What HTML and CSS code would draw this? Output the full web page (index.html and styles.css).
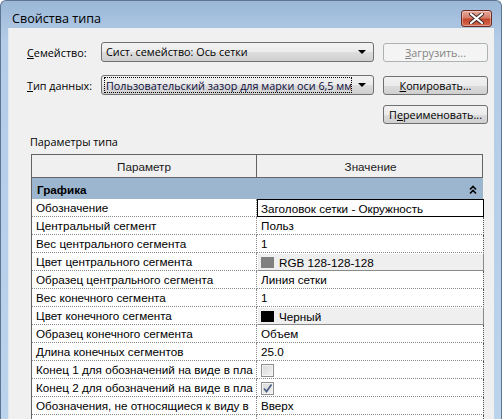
FILE: index.html
```html
<!DOCTYPE html>
<html lang="ru">
<head>
    <meta charset="UTF-8">
    <title>Свойства типа</title>
    <link rel="stylesheet" href="styles.css">
</head>
<body>

    <div class="window">
        <!-- Title bar -->
        <div class="titlebar">
            <span class="title">Свойства типа</span>
            <span class="close-btn">
                <svg width="15" height="11" viewBox="0 0 15 11">
                    <path d="M2 1 L13 10 M13 1 L2 10" stroke="#3a2a28" stroke-width="4" stroke-linecap="round"/>
                    <path d="M2 1 L13 10 M13 1 L2 10" stroke="#fff" stroke-width="2.2" stroke-linecap="round"/>
                </svg>
            </span>
        </div>

        <div class="client">
            <!-- Family -->
            <div class="form-row">
                <span class="field-label"><u>С</u>емейство:</span>
                <div class="combo">
                    <span class="combo-text">Сист. семейство: Ось сетки</span>
                    <span class="combo-arrow"></span>
                </div>
                <span class="btn disabled"><u>З</u>агрузить...</span>
            </div>

            <!-- Type -->
            <div class="form-row row-type">
                <span class="field-label"><u>Т</u>ип данных:</span>
                <div class="combo">
                    <span class="combo-text focused">Пользовательский зазор для марки оси 6,5 мм</span>
                    <span class="combo-arrow"></span>
                </div>
                <span class="btn"><u>К</u>опировать...</span>
            </div>

            <div class="form-row row-rename">
                <span class="btn">П<u>е</u>реименовать...</span>
            </div>

            <div class="section-label">Параметры типа</div>

            <!-- Property grid -->
            <div class="grid">
                <div class="grid-head">
                    <div class="head-cell">Параметр</div>
                    <div class="head-cell">Значение</div>
                </div>

                <div class="group-row">
                    <span>Графика</span>
                    <svg class="collapse" width="8" height="10" viewBox="0 0 8 10">
                        <path d="M1 4.5 L4 1.5 L7 4.5 M1 8.5 L4 5.5 L7 8.5" fill="none" stroke="#000" stroke-width="1.6"/>
                    </svg>
                </div>

                <div class="prop-row">
                    <div class="prop-name">Обозначение</div>
                    <div class="prop-value editing">Заголовок сетки - Окружность</div>
                </div>
                <div class="prop-row">
                    <div class="prop-name">Центральный сегмент</div>
                    <div class="prop-value">Польз</div>
                </div>
                <div class="prop-row">
                    <div class="prop-name">Вес центрального сегмента</div>
                    <div class="prop-value">1</div>
                </div>
                <div class="prop-row">
                    <div class="prop-name">Цвет центрального сегмента</div>
                    <div class="prop-value color-btn"><span class="swatch gray"></span>RGB 128-128-128</div>
                </div>
                <div class="prop-row">
                    <div class="prop-name">Образец центрального сегмента</div>
                    <div class="prop-value">Линия сетки</div>
                </div>
                <div class="prop-row">
                    <div class="prop-name">Вес конечного сегмента</div>
                    <div class="prop-value">1</div>
                </div>
                <div class="prop-row">
                    <div class="prop-name">Цвет конечного сегмента</div>
                    <div class="prop-value color-btn"><span class="swatch black"></span>Черный</div>
                </div>
                <div class="prop-row">
                    <div class="prop-name">Образец конечного сегмента</div>
                    <div class="prop-value">Объем</div>
                </div>
                <div class="prop-row">
                    <div class="prop-name">Длина конечных сегментов</div>
                    <div class="prop-value">25.0</div>
                </div>
                <div class="prop-row">
                    <div class="prop-name">Конец 1 для обозначений на виде в пла</div>
                    <div class="prop-value"><span class="checkbox"></span></div>
                </div>
                <div class="prop-row">
                    <div class="prop-name">Конец 2 для обозначений на виде в пла</div>
                    <div class="prop-value">
                        <span class="checkbox">
                            <svg width="11" height="11" viewBox="0 0 11 11">
                                <path d="M2 5.5 L4.5 8.5 L9.5 1.5" fill="none" stroke="#4d6185" stroke-width="1.8"/>
                            </svg>
                        </span>
                    </div>
                </div>
                <div class="prop-row">
                    <div class="prop-name">Обозначения, не относящиеся к виду в</div>
                    <div class="prop-value">Вверх</div>
                </div>
                <div class="prop-row">
                    <div class="prop-name">&nbsp;</div>
                    <div class="prop-value">&nbsp;</div>
                </div>
            </div>
        </div>
    </div>

</body>
</html>
```

FILE: styles.css
```css
/* General Reset */
* {
    margin: 0;
    padding: 0;
    box-sizing: border-box;
}

body {
    width: 502px;
    height: 419px;
    overflow: hidden;
    background: #fff;
    font-family: 'Open Sans', 'Noto Sans', sans-serif;
    font-size: 10.8px;
    color: #000;
}

/* Window frame */
.window {
    width: 502px;
    height: 419px;
    display: flex;
    flex-direction: column;
    background: linear-gradient(#9bb8d8, #b4cce6 40px, #bcd3ec);
    border: 1px solid #5d7592;
    border-bottom: none;
    border-radius: 6px 6px 0 0;
    overflow: hidden;
}

.titlebar {
    height: 29px;
    display: flex;
    align-items: flex-start;
    justify-content: space-between;
    padding: 9px 9px 0 11px;
}

.title {
    font-size: 12.6px;
    line-height: 18px;
    color: #000;
}

.close-btn {
    width: 31px;
    height: 17px;
    display: flex;
    align-items: center;
    justify-content: center;
    border: 1px solid #6b2b22;
    border-radius: 3px;
    background: linear-gradient(#e9a99a, #d47e6b 45%, #c4452c 55%, #d36a4f);
    box-shadow: inset 0 0 0 1px rgba(255, 255, 255, 0.35);
}

/* Client area */
.client {
    flex: 1;
    margin: 0 7px;
    background: #f0f0f0;
    padding: 14px 0 0 18px;
    border-left: 1px solid #dde8f3;
}

.form-row {
    display: flex;
    align-items: center;
    height: 20px;
}

.row-type {
    margin-top: 13px;
}

.row-rename {
    margin-top: 9px;
    padding-left: 356px;
}

.field-label {
    width: 74px;
    color: #000;
}

.combo {
    width: 273px;
    height: 20px;
    margin-right: 9px;
    display: flex;
    align-items: center;
    padding: 0 2px;
    border: 1px solid #707070;
    border-radius: 3px;
    background: linear-gradient(#f2f2f2, #ebebeb 50%, #dddddd 51%, #cfcfcf);
}

.combo-text {
    flex: 1;
    height: 16px;
    line-height: 15px;
    padding-left: 2px;
    color: #000;
    white-space: nowrap;
    overflow: hidden;
    margin-right: 6px;
}

.combo-text.focused {
    border: 1px dotted #000;
    padding-left: 1px;
    color: #0c0c3c;
}

.combo-arrow {
    width: 0;
    height: 0;
    margin-right: 5px;
    border-left: 4px solid transparent;
    border-right: 4px solid transparent;
    border-top: 4px solid #000;
}

.btn {
    width: 105px;
    height: 19px;
    display: flex;
    align-items: center;
    justify-content: center;
    border: 1px solid #707070;
    border-radius: 3px;
    background: linear-gradient(#f2f2f2, #ebebeb 50%, #dddddd 51%, #cfcfcf);
    color: #000;
}

.btn.disabled {
    border-color: #adb2b5;
    background: #f4f4f4;
    color: #838383;
}

.section-label {
    margin-top: 9px;
    padding-left: 3px;
    line-height: 17px;
    color: #000;
}

/* Property grid */
.grid {
    width: 452px;
    margin: 4px 0 0 4px;
    font-family: 'Liberation Sans', Arial, sans-serif;
    font-size: 11.7px;
}

.grid-head {
    display: grid;
    grid-template-columns: 225px 227px;
    height: 24px;
    border: 1px solid #646464;
    background: #f0f0f0;
}

.head-cell {
    display: flex;
    align-items: center;
    justify-content: center;
    padding-top: 1px;
    color: #1a1a1a;
}

.head-cell:first-child {
    border-right: 1px solid #646464;
}

.group-row {
    height: 21px;
    display: flex;
    align-items: center;
    justify-content: space-between;
    padding: 1px 6px 0 5px;
    background: #9db6d0;
    border-left: 1px solid #646464;
    font-weight: bold;
}

.collapse {
    margin-top: 1px;
}

.prop-row {
    display: grid;
    grid-template-columns: 225px 227px;
    height: 18px;
    background: #fff;
    border-left: 1px solid #646464;
}

.prop-name,
.prop-value {
    height: 18px;
    line-height: 16px;
    padding: 1px 0 0 4px;
    border-bottom: 1px dotted #8a8a8a;
    white-space: nowrap;
    overflow: hidden;
}

.prop-name {
    border-right: 1px dotted #8a8a8a;
}

.prop-value {
    display: flex;
    align-items: center;
    border-right: 1px dotted #505050;
}

.prop-value.editing {
    border: 1px solid #000;
    padding-left: 3px;
}

.prop-value.color-btn {
    background: #efefef;
    border: 1px solid #fff;
    border-right-color: #8a8a8a;
    border-bottom-color: #8a8a8a;
    padding-left: 3px;
}

.swatch {
    width: 13px;
    height: 11px;
    margin-right: 5px;
}

.swatch.gray {
    background: #808080;
}

.swatch.black {
    background: #000;
}

.checkbox {
    width: 13px;
    height: 13px;
    display: flex;
    align-items: center;
    justify-content: center;
    border: 1px solid #8e8f8f;
    background: linear-gradient(135deg, #d8d8d8, #f4f4f4);
    box-shadow: inset 0 0 0 1px #f4f4f4;
}
```
